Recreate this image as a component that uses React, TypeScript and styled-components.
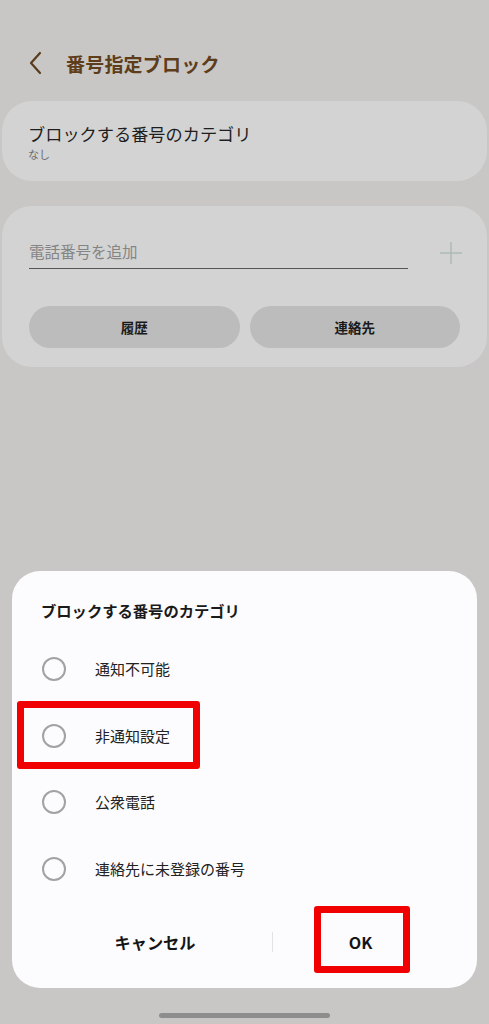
import React from "react";
import styled, { createGlobalStyle } from "styled-components";

const GlobalStyle = createGlobalStyle`
  html, body {
    margin: 0;
    padding: 0;
    background: #c9c7c5;
  }
  body {
    font-family: "Noto Sans CJK JP", "Noto Sans", Roboto, sans-serif;
  }
`;

const Screen = styled.div`
  position: relative;
  width: 489px;
  height: 1024px;
  overflow: hidden;
  background: #c9c7c5;
  display: flex;
  flex-direction: column;
`;

const Header = styled.div`
  display: flex;
  align-items: center;
  height: 40px;
  margin-top: 43px;
  padding-left: 28px;
  gap: 22px;
`;

const BackButton = styled.button`
  border: none;
  background: none;
  padding: 0;
  display: flex;
  align-items: center;
  color: #5a3c1d;
`;

const Title = styled.h1`
  margin: 0;
  font-size: 19px;
  font-weight: 700;
  color: #5e3d1a;
  letter-spacing: 0.2px;
`;

const Card = styled.div<{ $mt: number }>`
  margin: ${(p) => p.$mt}px 2px 0;
  background: #d3d3d3;
  border-radius: 30px;
`;

const CategoryCard = styled(Card)`
  height: 80px;
  padding: 20px 26px 0;
  box-sizing: border-box;
`;

const CardTitle = styled.div`
  font-size: 17.2px;
  line-height: 26px;
  color: #1e1e1e;
`;

const CardSub = styled.div`
  font-size: 11px;
  line-height: 14px;
  color: #6d6d6d;
`;

const InputCard = styled(Card)`
  height: 161px;
  padding: 30px 27px 0;
  box-sizing: border-box;
`;

const InputRow = styled.div`
  display: flex;
  align-items: center;
  gap: 31px;
`;

const InputField = styled.div`
  flex: 0 0 379px;
  height: 32px;
  border-bottom: 1.5px solid #555;
  font-size: 15.5px;
  line-height: 30px;
  color: #858585;
`;

const PlusIcon = styled.span`
  display: flex;
  color: #aebcb4;
`;

const ButtonRow = styled.div`
  display: flex;
  gap: 10px;
  margin-top: 37px;
`;

const PillButton = styled.button`
  flex: 1;
  height: 42px;
  border: none;
  border-radius: 21px;
  background: #bcbcbc;
  font-family: inherit;
  font-size: 13.5px;
  font-weight: 700;
  color: #1a1a1a;
`;

const Dialog = styled.div`
  position: absolute;
  left: 12px;
  right: 12px;
  bottom: 36px;
  background: #fcfcfe;
  border-radius: 28px;
  padding: 27px 0 21px;
  display: flex;
  flex-direction: column;
`;

const DialogTitle = styled.div`
  padding-left: 29px;
  font-size: 15.3px;
  font-weight: 700;
  line-height: 24px;
  color: #1a1a1a;
`;

const OptionList = styled.div`
  margin-top: 13px;
  display: flex;
  flex-direction: column;
`;

const Option = styled.div`
  position: relative;
  height: 66.7px;
  display: flex;
  align-items: center;
  padding-left: 30px;
  gap: 29px;
`;

const Radio = styled.span`
  width: 20px;
  height: 20px;
  border-radius: 50%;
  border: 2px solid #a2a2a2;
  box-sizing: content-box;
  margin-top: 1px;
`;

const OptionLabel = styled.span`
  font-size: 15px;
  color: #222;
`;

const Highlight = styled.span<{ $l: number; $t: number; $w: number; $h: number }>`
  position: absolute;
  left: ${(p) => p.$l}px;
  top: ${(p) => p.$t}px;
  width: ${(p) => p.$w}px;
  height: ${(p) => p.$h}px;
  border: 7px solid #f00000;
  border-radius: 3px;
  box-sizing: border-box;
  pointer-events: none;
`;

const Actions = styled.div`
  height: 50px;
  margin-top: 15px;
  padding: 0 29px 0 26px;
  display: grid;
  grid-template-columns: 234px 1px 1fr;
  align-items: center;
`;

const ActionButton = styled.button`
  position: relative;
  border: none;
  background: none;
  font-family: inherit;
  font-size: 16.2px;
  font-weight: 700;
  color: #151515;
  height: 50px;
`;

const Divider = styled.span`
  width: 1px;
  height: 20px;
  background: #e2e2e2;
`;

const HomeBar = styled.div`
  position: absolute;
  left: 159px;
  bottom: 6px;
  width: 171px;
  height: 5px;
  border-radius: 3px;
  background: #8d8d8d;
`;

const options = ["通知不可能", "非通知設定", "公衆電話", "連絡先に未登録の番号"];

export default function App() {
  return (
    <>
      <GlobalStyle />
      <Screen>
        <Header>
          <BackButton aria-label="戻る">
            <svg width="16" height="24" viewBox="0 0 16 24" fill="none">
              <path d="M12 2 L3 12 L12 22" stroke="currentColor" strokeWidth="2.2" strokeLinecap="round" strokeLinejoin="round" />
            </svg>
          </BackButton>
          <Title>番号指定ブロック</Title>
        </Header>

        <CategoryCard $mt={18}>
          <CardTitle>ブロックする番号のカテゴリ</CardTitle>
          <CardSub>なし</CardSub>
        </CategoryCard>

        <InputCard $mt={25}>
          <InputRow>
            <InputField>電話番号を追加</InputField>
            <PlusIcon>
              <svg width="24" height="24" viewBox="0 0 24 24" fill="none">
                <path d="M12 1 V23 M1 12 H23" stroke="currentColor" strokeWidth="1.5" />
              </svg>
            </PlusIcon>
          </InputRow>
          <ButtonRow>
            <PillButton>履歴</PillButton>
            <PillButton>連絡先</PillButton>
          </ButtonRow>
        </InputCard>

        <Dialog>
          <DialogTitle>ブロックする番号のカテゴリ</DialogTitle>
          <OptionList>
            {options.map((label, i) => (
              <Option key={label}>
                <Radio />
                <OptionLabel>{label}</OptionLabel>
                {i === 1 && <Highlight $l={5} $t={-1} $w={183} $h={68} />}
              </Option>
            ))}
          </OptionList>
          <Actions>
            <ActionButton>キャンセル</ActionButton>
            <Divider />
            <ActionButton>
              OK
              <Highlight $l={41} $t={-11} $w={96} $h={67} />
            </ActionButton>
          </Actions>
        </Dialog>

        <HomeBar />
      </Screen>
    </>
  );
}
